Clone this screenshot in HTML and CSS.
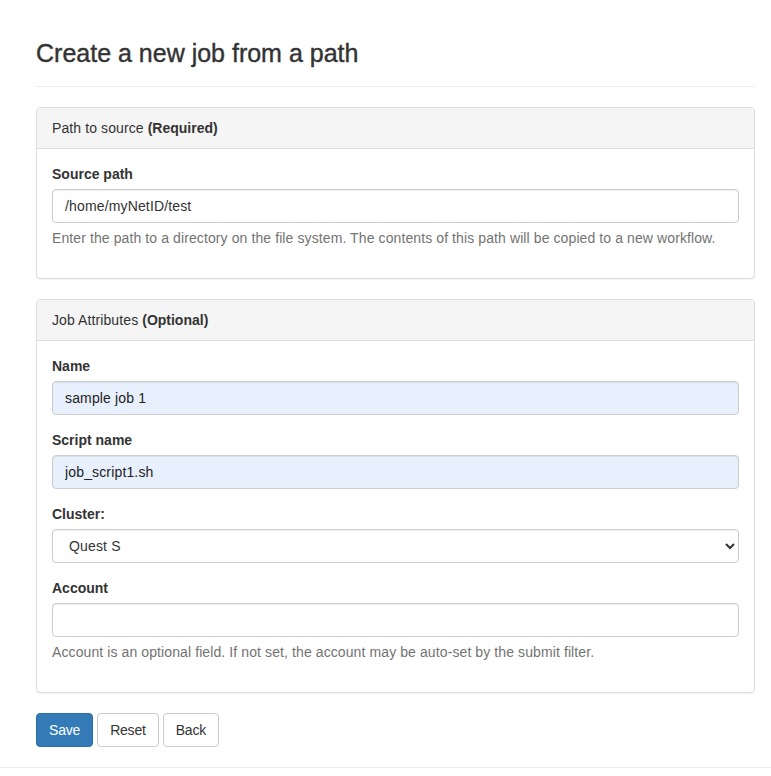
FILE: index.html
```html
<!DOCTYPE html>
<html lang="en">
<head>
<meta charset="utf-8">
<title>Create a new job from a path</title>
<link rel="stylesheet" href="styles.css">
</head>
<body>
<div class="container">
  <div class="page-header">
    <h3 class="title">Create a new job from a path</h3>
  </div>
  <form class="job-form">
    <div class="panel">
      <div class="panel-heading">Path to source <strong>(Required)</strong></div>
      <div class="panel-body">
        <div class="form-group">
          <label class="control-label" for="src">Source path</label>
          <input class="form-control" id="src" type="text" value="/home/myNetID/test">
          <p class="help-block">Enter the path to a directory on the file system. The contents of this path will be copied to a new workflow.</p>
        </div>
      </div>
    </div>
    <div class="panel">
      <div class="panel-heading">Job Attributes <strong>(Optional)</strong></div>
      <div class="panel-body">
        <div class="form-group">
          <label class="control-label" for="name">Name</label>
          <input class="form-control autofilled" id="name" type="text" value="sample job 1">
        </div>
        <div class="form-group">
          <label class="control-label" for="script">Script name</label>
          <input class="form-control autofilled" id="script" type="text" value="job_script1.sh">
        </div>
        <div class="form-group">
          <label class="control-label" for="cluster">Cluster:</label>
          <select class="form-control select" id="cluster">
            <option>Quest S</option>
          </select>
        </div>
        <div class="form-group">
          <label class="control-label" for="account">Account</label>
          <input class="form-control" id="account" type="text" value="">
          <p class="help-block">Account is an optional field. If not set, the account may be auto-set by the submit filter.</p>
        </div>
      </div>
    </div>
    <div class="actions">
      <button type="button" class="btn btn-primary">Save</button>
      <button type="button" class="btn btn-default">Reset</button>
      <button type="button" class="btn btn-default">Back</button>
    </div>
  </form>
</div>
<footer class="footer"></footer>
</body>
</html>
```

FILE: styles.css
```css
* {
  box-sizing: border-box;
}

html, body {
  margin: 0;
  padding: 0;
  background: #fff;
}

body {
  font-family: "Liberation Sans", Arial, Helvetica, sans-serif;
  font-size: 14px;
  line-height: 20px;
  color: #333;
  letter-spacing: 0.1px;
}

.container {
  padding: 0 16px 0 36px;
}

.page-header {
  margin: 40px 0 20px;
  padding-bottom: 9px;
  border-bottom: 1px solid #eee;
}

.title {
  margin: 0 0 10px;
  font-size: 25px;
  line-height: 27px;
  font-weight: 400;
  letter-spacing: 0;
  -webkit-text-stroke: 0.4px #333;
  color: #333;
}

.job-form {
  margin: 0;
}

.panel {
  margin-bottom: 20px;
  background: #fff;
  border: 1px solid #ddd;
  border-radius: 4px;
  box-shadow: 0 1px 1px rgba(0, 0, 0, 0.05);
}

.panel-heading {
  padding: 10px 15px;
  background: #f5f5f5;
  border-bottom: 1px solid #ddd;
  border-radius: 3px 3px 0 0;
  color: #333;
}

.panel-heading strong {
  font-weight: 700;
  letter-spacing: 0;
}

.panel-body {
  padding: 15px 15px 30px;
  display: flex;
  flex-direction: column;
  gap: 15px;
}

.form-group {
  display: flex;
  flex-direction: column;
}

.control-label {
  font-weight: 700;
  margin-bottom: 5px;
  letter-spacing: 0;
}

.form-control {
  display: block;
  width: 100%;
  height: 34px;
  padding: 6px 12px;
  font-family: inherit;
  font-size: 14px;
  line-height: 20px;
  letter-spacing: 0.15px;
  color: #555;
  background: #fff;
  border: 1px solid #ccc;
  border-radius: 4px;
  box-shadow: inset 0 1px 1px rgba(0, 0, 0, 0.075);
  margin: 0;
}

.form-control.autofilled {
  background: #e8f0fe;
  color: #222;
}

#src, #account {
  color: #333;
}

.select {
  color: #333;
}

.help-block {
  margin: 5px 0 0;
  color: #737373;
}

.actions {
  display: flex;
  gap: 4px;
  margin-bottom: 20px;
}

.btn {
  height: 34px;
  padding: 6px 12px;
  font-family: inherit;
  font-size: 14px;
  line-height: 20px;
  letter-spacing: -0.2px;
  border: 1px solid transparent;
  border-radius: 4px;
  cursor: pointer;
}

.btn-primary {
  color: #fff;
  background: #337ab7;
  border-color: #2e6da4;
}

.btn-default {
  color: #333;
  background: #fff;
  border-color: #ccc;
}

.footer {
  border-top: 1px solid #eee;
  height: 10px;
}
```
